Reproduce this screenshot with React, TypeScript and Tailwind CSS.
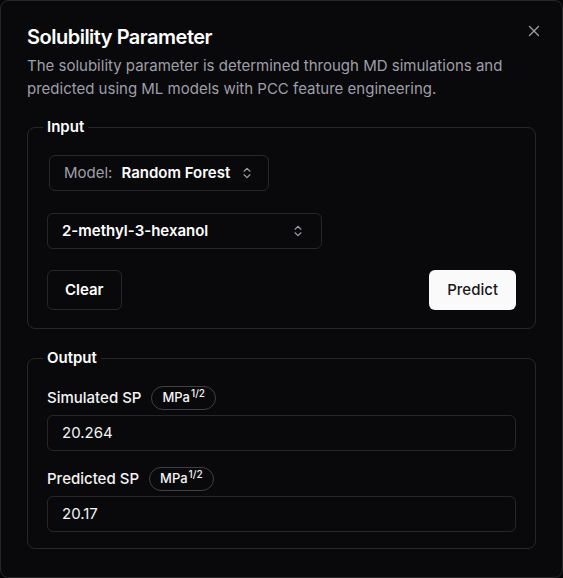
import React from "react";
import { X, ChevronsUpDown } from "lucide-react";

const Unit = () => (
  <span className="inline-flex h-[24px] items-center rounded-full border border-zinc-700 px-[10px] text-[13px] font-medium text-zinc-100">
    MPa<sup className="-top-[5px] ml-[1px] text-[10px]">1/2</sup>
  </span>
);

const OutputRow = ({ label, value, className }: { label: string; value: string; className?: string }) => (
  <div className={className}>
    <div className="flex items-center gap-[10px]">
      <span className="text-[15px] font-medium text-zinc-100">{label}</span>
      <Unit />
    </div>
    <div className="mt-[5px] flex h-9 items-center rounded-md border border-zinc-800 px-[14px] text-[15px] text-zinc-100">
      {value}
    </div>
  </div>
);

export default function App() {
  return (
    <div className="min-h-screen bg-[#050506]" style={{ fontFamily: "Inter, 'Noto Sans', sans-serif" }}>
      <div className="relative h-[578px] w-[563px] rounded-lg border border-zinc-800 bg-[#09090b] px-[26px] pt-[22px] text-white">
        <button className="absolute right-[19px] top-[21px] text-zinc-400">
          <X size={18} strokeWidth={1.75} />
        </button>

        <h2 className="text-[20px] font-semibold leading-7 tracking-tight">Solubility Parameter</h2>
        <p className="mt-[3px] text-[15px] leading-[23px] text-zinc-400">
          The solubility parameter is determined through MD simulations and predicted using ML models with PCC
          feature engineering.
        </p>

        <fieldset className="mt-[17px] rounded-lg border border-zinc-800 px-[19px] pb-[18px] pt-[18px]">
          <legend className="-ml-1 px-1 text-[15px] font-semibold leading-5">Input</legend>
          <button className="ml-[2px] flex h-9 items-center rounded-md border border-zinc-800 pl-[14px] pr-[14px] text-[15px]">
            <span className="text-zinc-400">Model:</span>
            <span className="ml-[9px] font-semibold">Random Forest</span>
            <ChevronsUpDown size={14} className="ml-[10px] text-zinc-400" />
          </button>
          <button className="mt-[22px] flex h-9 w-[275px] items-center justify-between rounded-md border border-zinc-800 pl-[14px] pr-[16px] text-[15px] font-semibold">
            2-methyl-3-hexanol
            <ChevronsUpDown size={14} className="text-zinc-400" />
          </button>
          <div className="mt-[21px] flex justify-between">
            <button className="h-10 rounded-md border border-zinc-800 px-[17px] text-[15px] font-semibold">Clear</button>
            <button className="h-10 rounded-md bg-[#fafafa] px-[18px] text-[15px] font-medium text-zinc-900">
              Predict
            </button>
          </div>
        </fieldset>

        <fieldset className="mt-[19px] rounded-lg border border-zinc-800 px-[19px] pb-[16px] pt-[18px]">
          <legend className="-ml-1 px-1 text-[15px] font-semibold leading-5">Output</legend>
          <OutputRow label="Simulated SP" value="20.264" />
          <OutputRow label="Predicted SP" value="20.17" className="mt-[16px]" />
        </fieldset>
      </div>
    </div>
  );
}
